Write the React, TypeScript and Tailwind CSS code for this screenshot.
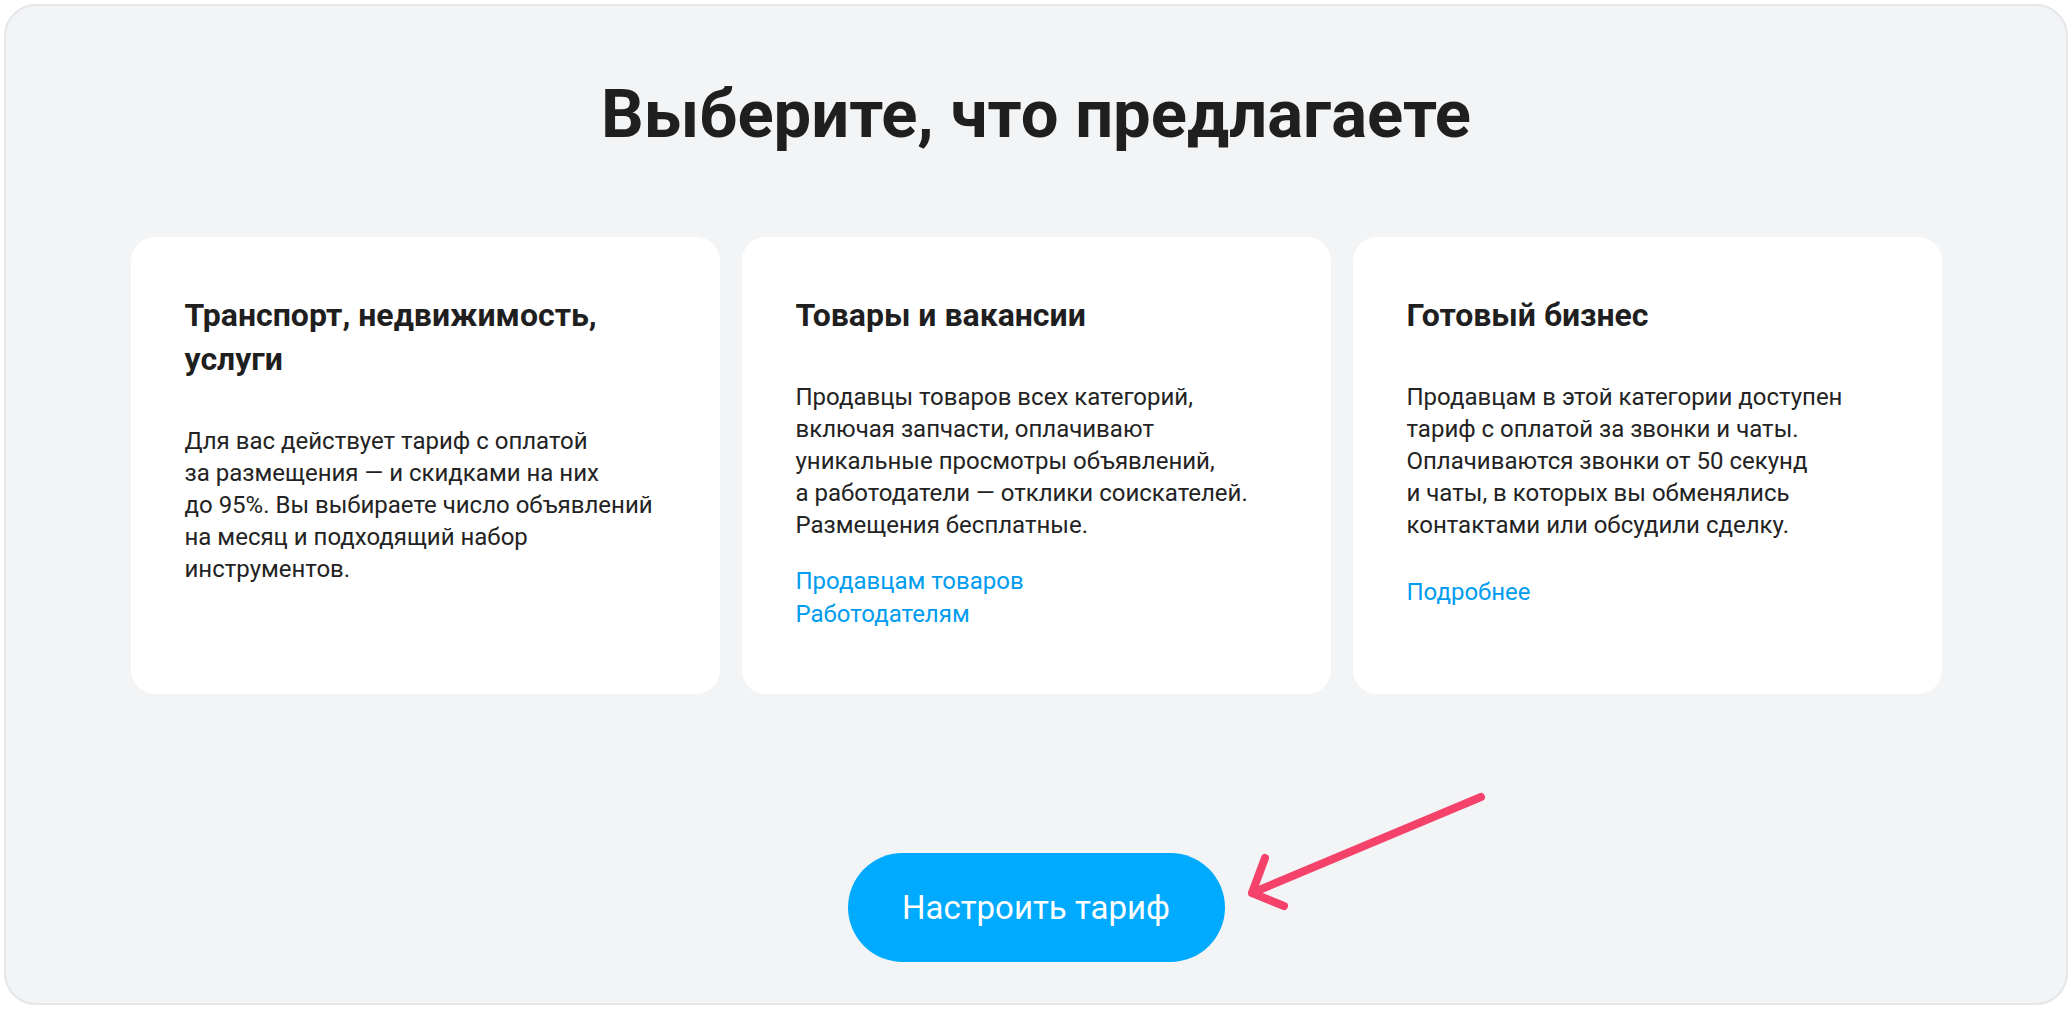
const cards = [
  {
    title: "Транспорт, недвижимость, услуги",
    text: [
      "Для вас действует тариф с оплатой",
      "за размещения — и скидками на них",
      "до 95%. Вы выбираете число объявлений",
      "на месяц и подходящий набор",
      "инструментов.",
    ],
    links: [] as string[],
    linkGap: "",
  },
  {
    title: "Товары и вакансии",
    text: [
      "Продавцы товаров всех категорий,",
      "включая запчасти, оплачивают",
      "уникальные просмотры объявлений,",
      "а работодатели — отклики соискателей.",
      "Размещения бесплатные.",
    ],
    links: ["Продавцам товаров", "Работодателям"],
    linkGap: "mt-[24px]",
  },
  {
    title: "Готовый бизнес",
    text: [
      "Продавцам в этой категории доступен",
      "тариф с оплатой за звонки и чаты.",
      "Оплачиваются звонки от 50 секунд",
      "и чаты, в которых вы обменялись",
      "контактами или обсудили сделку.",
    ],
    links: ["Подробнее"],
    linkGap: "mt-[35px]",
  },
];

function Arrow() {
  return (
    <svg
      className="absolute left-[1236px] top-[786px] h-[130px] w-[260px]"
      viewBox="0 0 260 130"
      fill="none"
    >
      <path
        d="M245 11 L16 107 M29 72 L16 107 L48 120"
        stroke="#f4426a"
        strokeWidth={8}
        strokeLinecap="round"
        strokeLinejoin="round"
      />
    </svg>
  );
}

export default function App() {
  return (
    <div
      className="relative min-h-[1009px] bg-white p-1"
      style={{ fontFamily: "Roboto, 'Noto Sans', sans-serif" }}
    >
      <div className="flex h-[1001px] flex-col items-center rounded-[32px] border-2 border-[#e4e6e9] bg-[#f3f4f6] pt-[68px]">
        <h1 className="text-[67px] font-bold leading-[80px] text-[#1f1f1f]">
          Выберите, что предлагаете
        </h1>

        <div className="mt-[83px] flex gap-[22px]">
          {cards.map((c) => (
            <div
              key={c.title}
              className="h-[457px] w-[589px] rounded-[24px] bg-white px-[54px] pt-[56px]"
            >
              <h2 className="max-w-[440px] text-[32px] font-bold leading-[44px] text-[#1f1f1f]">
                {c.title}
              </h2>
              <div className="mt-[44px] text-[24px] leading-[32px] text-[#232323]">
                {c.text.map((line) => (
                  <div key={line}>{line}</div>
                ))}
              </div>
              {c.links.length > 0 && (
                <div className={`${c.linkGap} flex flex-col text-[24px] leading-[33px] text-[#009cf0]`}>
                  {c.links.map((l) => (
                    <a key={l} href="#">
                      {l}
                    </a>
                  ))}
                </div>
              )}
            </div>
          ))}
        </div>

        <button className="mt-[159px] h-[109px] w-[377px] rounded-full bg-[#00aaff] text-[33px] text-white">
          Настроить тариф
        </button>
      </div>
      <Arrow />
    </div>
  );
}
